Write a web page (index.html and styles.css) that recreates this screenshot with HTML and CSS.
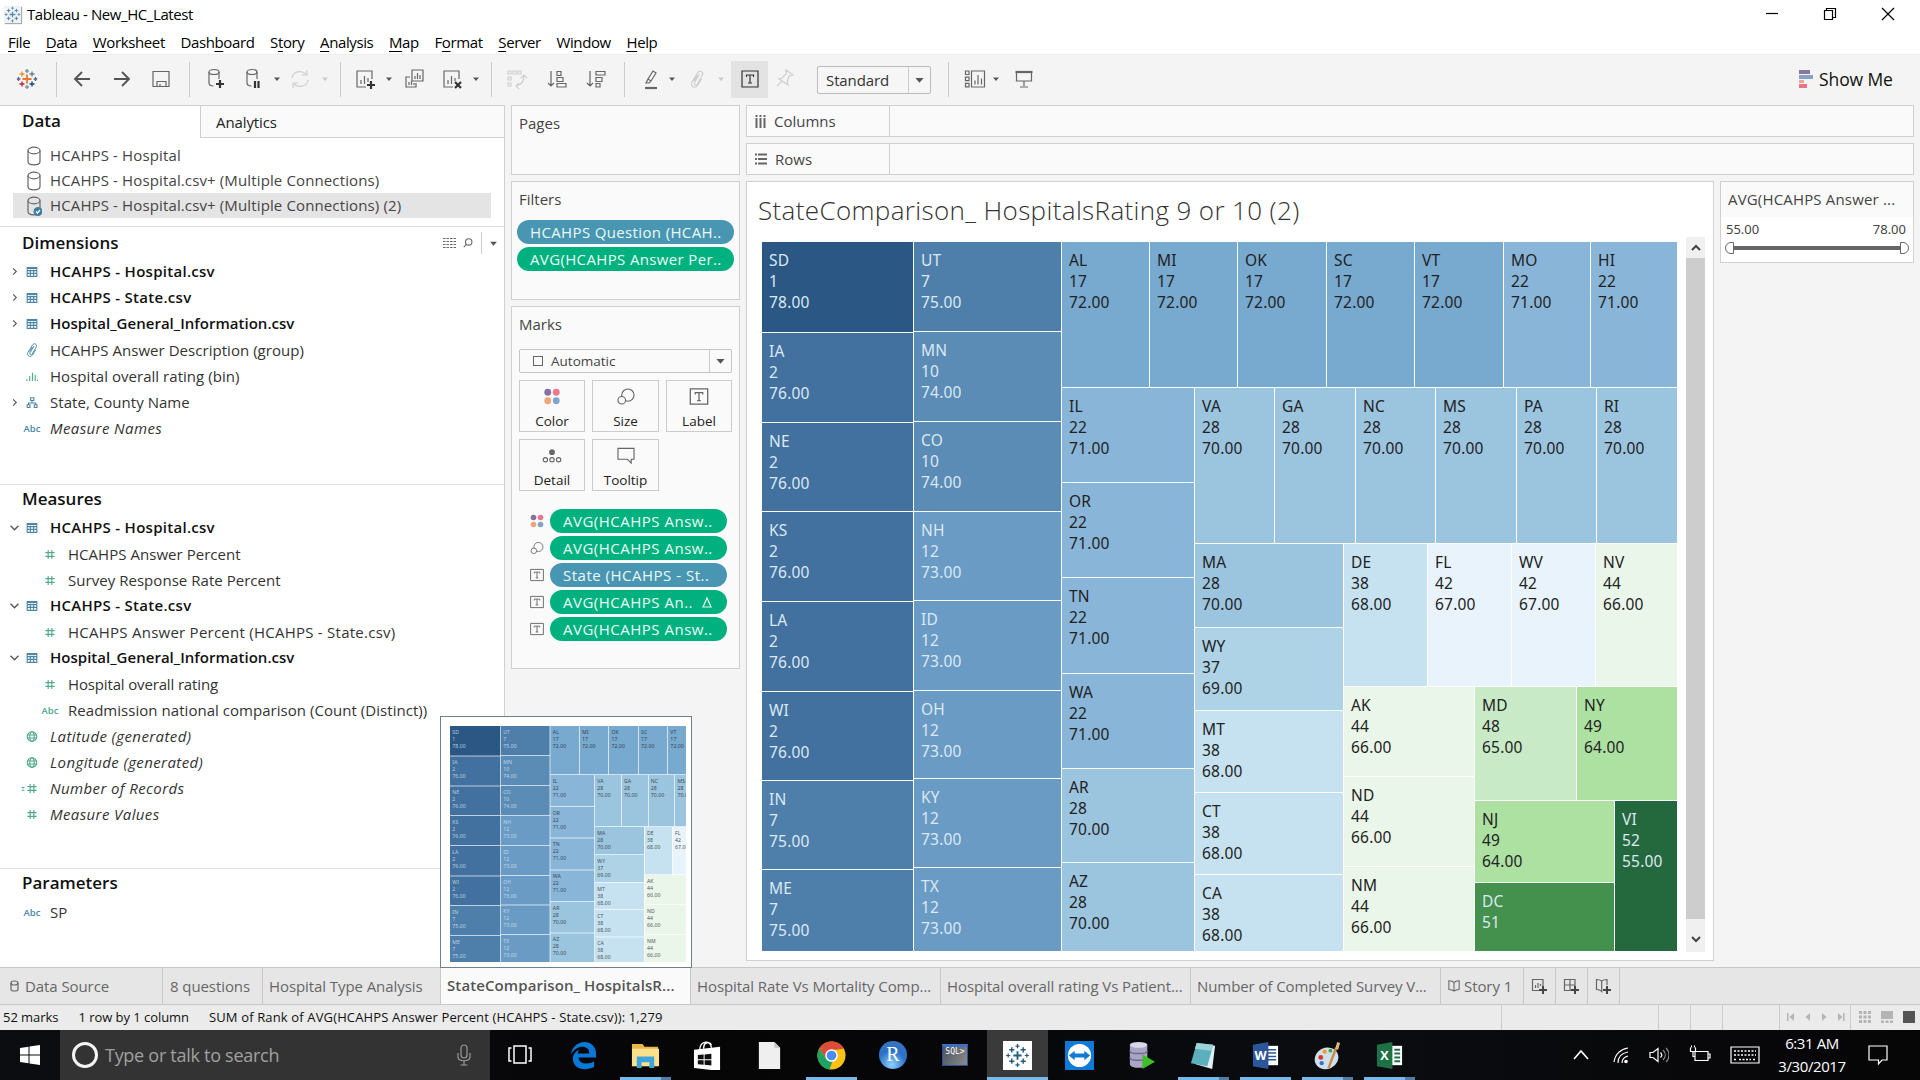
FILE: index.html
```html
<!DOCTYPE html>
<html lang="en">
<head>
<meta charset="utf-8">
<title>Tableau - New_HC_Latest</title>
<link rel="stylesheet" href="styles.css">
</head>
<body>
<svg class="sprites" width="0" height="0">
  <defs>
    <symbol id="caret" viewBox="0 0 8 8"><path d="M1 2.500h6L4 6z" fill="currentColor"/></symbol>
    <symbol id="spark" viewBox="0 0 24 24">
      <path d="M12 8v8M8 12h8" stroke-width="1.800"/>
      <path d="M12 1v4M10 3h4M12 19v4M10 21h4M1 12h4M3 10v4M19 12h4M21 10v4" stroke-width="1.200"/>
      <path d="M6.500 4v5M4 6.500h5M17.500 4v5M15 6.500h5M6.500 15v5M4 17.500h5M17.500 15v5M15 17.500h5" stroke-width="1.400"/>
    </symbol>
    <symbol id="cyl" viewBox="0 0 24 24"><ellipse cx="11" cy="5" rx="5" ry="2.500"/><path d="M6 5v11c0 2 2 3 4.500 3M16 5v7"/></symbol>
    <symbol id="db" viewBox="0 0 16 20"><ellipse cx="8" cy="4.500" rx="6" ry="3.300"/><path d="M2 4.500v11c0 4.400 12 4.400 12 0v-11"/></symbol>
    <symbol id="table" viewBox="0 0 12 11"><path d="M.7.7h10.600v9.600H.7zM.7 4h10.600M.7 7h10.600M4.200 3v7.300M7.800 3v7.300"/><path d="M.7 1.400h10.600" stroke-width="1.800"/></symbol>
    <symbol id="hash" viewBox="0 0 12 12"><path d="M4 1v10M8 1v10M1 4h10M1 8h10"/></symbol>
    <symbol id="globe" viewBox="0 0 12 12"><circle cx="6" cy="6" r="5.200"/><path d="M.8 4.300h10.400M.8 7.700h10.400"/><ellipse cx="6" cy="6" rx="2.400" ry="5.200"/></symbol>
    <symbol id="right" viewBox="0 0 8 10"><path d="M2.500 1.500L6 5 2.500 8.500"/></symbol>
    <symbol id="down" viewBox="0 0 10 8"><path d="M1.500 2.500L5 6l3.500-3.500"/></symbol>
    <symbol id="clip" viewBox="0 0 16 20"><path d="M10.500 5l-5 8.500c-1 2.500 1.500 3.500 2.800 1.500l5-8.500c1.500-4-2.500-6-4.800-2.500L3 13c-2 4.500 3 7 5.500 3.500l4-6.500M8.500 6L5 12"/></symbol>
    <symbol id="dots" viewBox="0 0 18 18"><circle cx="4.500" cy="4.500" r="3.600" fill="#8670a0" stroke="none"/><circle cx="13.500" cy="4.500" r="3.600" fill="#ee7789" stroke="none"/><circle cx="4.500" cy="13.500" r="3.600" fill="#f0a47c" stroke="none"/><circle cx="13.500" cy="13.500" r="3.600" fill="#7fa5cc" stroke="none"/></symbol>
    <symbol id="size" viewBox="0 0 20 18"><circle cx="12" cy="7.500" r="6.500"/><circle cx="5.500" cy="13" r="4" fill="#fafafa"/></symbol>
    <symbol id="label" viewBox="0 0 18 16"><path d="M.8.8h16.400v14.400H.8z"/><path d="M5.500 6V4.300h7V6M9 4.300v7.400M7.300 11.800h3.400"/></symbol>
    <symbol id="book" viewBox="0 0 14 16"><path d="M1 2c2.500 0 4.500 0 6 2 1.500-2 3.500-2 6-2v10c-3 0-4.500.5-6 2-1.500-1.500-3-2-6-2zM7 4v10"/></symbol>
  </defs>
</svg>

<div class="app">
  <header class="titlebar">
    <svg class="applogo" viewBox="0 0 24 24" stroke="#5b87a6"><use href="#spark"/></svg>
    <span class="apptitle">Tableau - New_HC_Latest</span>
    <div class="winbtns">
      <svg width="14" height="16" viewBox="0 0 14 16"><path d="M1 7.500h12"/></svg>
      <svg width="14" height="16" viewBox="0 0 14 16"><path d="M1.500 4.500h8v9h-8zM3.500 4.500v-2h9v9h-3"/></svg>
      <svg width="14" height="16" viewBox="0 0 14 16"><path d="M1 2l12 12M13 2L1 14"/></svg>
    </div>
  </header>
  <nav class="menubar">
    <span><u>F</u>ile</span><span><u>D</u>ata</span><span><u>W</u>orksheet</span><span>Dash<u>b</u>oard</span><span>S<u>t</u>ory</span><span><u>A</u>nalysis</span><span><u>M</u>ap</span><span>F<u>o</u>rmat</span><span><u>S</u>erver</span><span>Wi<u>n</u>dow</span><span><u>H</u>elp</span>
  </nav>

  <div class="toolbar">
    <svg class="ic" viewBox="0 0 24 24"><g stroke-width="1.400"><path d="M12 7.500v9M7.500 12h9" stroke="#e8762c" stroke-width="1.800"/><path d="M12 2v4M10 4h4M12 18v4M10 20h4" stroke="#7199a6"/><path d="M3.500 10v4M1.800 12h3.600M20.500 10v4M18.600 12h3.600" stroke="#5b6591"/><path d="M7 4.500v5M4.500 7h5" stroke="#eb912c"/><path d="M17 4.500v5M14.500 7h5" stroke="#59879b"/><path d="M7 14.500v5M4.500 17h5" stroke="#c72035"/><path d="M17 14.500v5M14.500 17h5" stroke="#1f447e"/></g></svg>
    <i class="sep"></i>
    <svg class="ic heavy" viewBox="0 0 24 24"><path d="M20 12H5M12 5l-7 7 7 7"/></svg>
    <svg class="ic heavy" viewBox="0 0 24 24"><path d="M4 12h15M12 5l7 7-7 7"/></svg>
    <svg class="ic" viewBox="0 0 24 24"><path d="M4 4.500h16v15H4zM8 19.500v-5h9v5M11 17v2"/></svg>
    <i class="sep"></i>
    <svg class="ic" viewBox="0 0 24 24"><use href="#cyl"/><path class="bold" d="M17 13v8M13 17h8"/></svg>
    <svg class="ic" viewBox="0 0 24 24"><use href="#cyl"/><path class="bold" d="M14 14v7M17.500 14v7"/></svg>
    <svg class="caret"><use href="#caret"/></svg>
    <svg class="ic off" viewBox="0 0 24 24"><path d="M4 11a8 7 0 0 1 14-4M20 13a8 7 0 0 1-14 4M19 3v5h-5M5 21v-5h5"/></svg>
    <svg class="caret off"><use href="#caret"/></svg>
    <i class="sep"></i>
    <svg class="ic" viewBox="0 0 24 24"><path d="M19 12V4H4v16h9M8 17v-4M11.500 17V9M15 15v-4"/><path class="bold" d="M18 14v8M14 18h8"/></svg>
    <svg class="caret"><use href="#caret"/></svg>
    <svg class="ic" viewBox="0 0 24 24"><path d="M10 3h11v11H10zM13 12V9M15.500 12V6M18 12V8M8 10H4v10h10v-4M7 18v-3M9.500 18v-4M12 18v-2"/></svg>
    <svg class="ic" viewBox="0 0 24 24"><path d="M19 12V4H4v16h9M8 17v-4M11.500 17V9M15 14v-3"/><path class="bold" d="M15 15l6 6M21 15l-6 6"/></svg>
    <svg class="caret"><use href="#caret"/></svg>
    <i class="sep"></i>
    <svg class="ic off" viewBox="0 0 24 24"><path d="M4 4h3v3H4zM9 4h3v3H9zM14 4h3v3h-3zM4 10h3v3H4zM4 16h3v3H4zM20 9c0 6-3 9-8 10M17 11l3-3 3 3M15 16l-3 3 3 3"/></svg>
    <svg class="ic" viewBox="0 0 24 24"><path d="M6 4v15M3 16l3 3 3-3M12 4.500h4v4h-4zM12 10.500h6v4h-6zM12 16.500h9v3.500h-9z"/></svg>
    <svg class="ic" viewBox="0 0 24 24"><path d="M6 4v15M3 16l3 3 3-3M12 4.500h9v3.500h-9zM12 10.500h6v4h-6zM12 16.500h4v3.500h-4z"/></svg>
    <i class="sep"></i>
    <svg class="ic" viewBox="0 0 24 24"><path d="M9 12l5-8 3 2-5 8zM9 12l-2 4h3l2-2"/><path d="M6 21h12" stroke-width="2.200"/></svg>
    <svg class="caret"><use href="#caret"/></svg>
    <svg class="ic off" viewBox="-2 -2 20 24"><use href="#clip" width="16" height="20"/></svg>
    <svg class="caret off"><use href="#caret"/></svg>
    <span class="active"><svg width="18" height="18" viewBox="0 0 18 18"><path d="M1 1h16v16H1zM5.500 7V5h7v2M9 5v8M7 13h4"/></svg></span>
    <svg class="ic off" viewBox="0 0 24 24"><path d="M13 3l7 5-4 1-2 6 1 3-9-6 3-1 4-4zM9 14l-5 5"/></svg>
    <span class="select">Standard<svg class="tri"><use href="#caret"/></svg></span>
    <i class="sep"></i>
    <svg class="ic" viewBox="0 0 24 24"><path d="M2.500 4h3.500v3.500H2.500zM2.500 10.200h3.500v3.500H2.500zM2.500 16.300h3.500v3.500H2.500zM8.500 4h13v16h-13zM12 17.500v-4M15 17.500V8M18.500 17.500v-6"/></svg>
    <svg class="caret"><use href="#caret"/></svg>
    <svg class="ic" viewBox="0 0 24 24"><path d="M4.500 5v9h15V5M12 14v5M8 20h8"/><path d="M3.500 5h17" stroke-width="2.200"/></svg>
    <span class="showme"><svg width="14" height="18"><path fill="#857a9c" d="M0 0h11v4H0z"/><path fill="#86a3c6" d="M0 5h14v4H0z"/><path fill="#efa88e" d="M0 10h5v3H0z"/><path fill="#e87688" d="M0 14h8v4H0z"/></svg>Show Me</span>
  </div>

  <main class="work">
    <aside class="side">
      <div class="sidetabs">
        <b>Data</b>
        <div>Analytics<svg width="8" height="10" viewBox="0 0 8 10" fill="#556"><path d="M4 0l3 4H1zM4 10L1 6h6z"/></svg></div>
      </div>
      <ul class="sources">
        <li><svg><use href="#db"/></svg><span>HCAHPS - Hospital</span></li>
        <li><svg><use href="#db"/></svg><span>HCAHPS - Hospital.csv+ (Multiple Connections)</span></li>
        <li class="sel"><svg viewBox="0 0 16 20"><use href="#db"/><circle cx="12" cy="15.500" r="4.500" fill="#3d7e9e" stroke="none"/><path d="M10 15.500l1.500 1.500 2.500-3" stroke="#fff"/></svg><span>HCAHPS - Hospital.csv+ (Multiple Connections) (2)</span></li>
      </ul>
      <section class="fields dims">
        <h2>Dimensions
          <span class="tools"><svg width="13" height="10" viewBox="0 0 13 10"><path d="M0 .5h13M0 3.500h13M0 6.500h13M0 9.500h13" stroke-dasharray="2.500 1"/></svg><svg width="10" height="10" viewBox="0 0 11 11"><circle cx="6.300" cy="4.300" r="3.500"/><path d="M4 6.800L.8 10"/></svg><i></i><svg width="9" height="9"><use href="#caret"/></svg></span>
        </h2>
        <p class="tbl"><svg class="ch"><use href="#right"/></svg><svg class="fi"><use href="#table"/></svg>HCAHPS - Hospital.csv</p>
        <p class="tbl"><svg class="ch"><use href="#right"/></svg><svg class="fi"><use href="#table"/></svg>HCAHPS - State.csv</p>
        <p class="tbl long"><svg class="ch"><use href="#right"/></svg><svg class="fi"><use href="#table"/></svg>Hospital_General_Information.csv</p>
        <p><i class="ch"></i><svg class="fi tall"><use href="#clip"/></svg>HCAHPS Answer Description (group)</p>
        <p class="green"><i class="ch"></i><svg class="fi" viewBox="0 0 13 12"><path d="M1 11V9M4 11V5.500M7 11V2M10 11V4M12.500 11V9.500"/></svg>Hospital overall rating (bin)</p>
        <p><svg class="ch"><use href="#right"/></svg><svg class="fi" viewBox="0 0 12 12"><path d="M4.500.8h3.500v3H4.500zM.8 8.500h3v3h-3zM8.500 8.500h3v3h-3zM6 4v2.500M2.200 8.500v-2h7.800v2"/></svg>State, County Name</p>
        <p><i class="ch"></i><span class="abc">Abc</span><em>Measure Names</em></p>
      </section>
      <section class="fields meas">
        <h2>Measures</h2>
        <p class="tbl"><svg class="ch"><use href="#down"/></svg><svg class="fi"><use href="#table"/></svg>HCAHPS - Hospital.csv</p>
        <p class="green in"><i class="ch"></i><svg class="fi"><use href="#hash"/></svg>HCAHPS Answer Percent</p>
        <p class="green in"><i class="ch"></i><svg class="fi"><use href="#hash"/></svg>Survey Response Rate Percent</p>
        <p class="tbl"><svg class="ch"><use href="#down"/></svg><svg class="fi"><use href="#table"/></svg>HCAHPS - State.csv</p>
        <p class="green in wide"><i class="ch"></i><svg class="fi"><use href="#hash"/></svg>HCAHPS Answer Percent (HCAHPS - State.csv)</p>
        <p class="tbl long"><svg class="ch"><use href="#down"/></svg><svg class="fi"><use href="#table"/></svg>Hospital_General_Information.csv</p>
        <p class="green in tight"><i class="ch"></i><svg class="fi"><use href="#hash"/></svg>Hospital overall rating</p>
        <p class="green in"><i class="ch"></i><span class="abc">Abc</span>Readmission national comparison (Count (Distinct))</p>
        <p class="green"><i class="ch"></i><svg class="fi"><use href="#globe"/></svg><em>Latitude (generated)</em></p>
        <p class="green"><i class="ch"></i><svg class="fi"><use href="#globe"/></svg><em>Longitude (generated)</em></p>
        <p class="green"><svg class="ch eq" viewBox="0 0 15 10"><path d="M15.500 4h3M15.500 7h3"/></svg><svg class="fi"><use href="#hash"/></svg><em>Number of Records</em></p>
        <p class="green"><i class="ch"></i><svg class="fi"><use href="#hash"/></svg><em>Measure Values</em></p>
      </section>
      <section class="fields params">
        <h2>Parameters</h2>
        <p><i class="ch"></i><span class="abc">Abc</span>SP</p>
      </section>
    </aside>

    <div class="cards">
      <section class="card pages"><h3>Pages</h3></section>
      <section class="card filters"><h3>Filters</h3>
        <div class="pill blue">HCAHPS Question (HCAH..</div>
        <div class="pill">AVG(HCAHPS Answer Per..</div>
      </section>
      <section class="card marks"><h3>Marks</h3>
        <div class="marktype"><i></i>Automatic<svg class="tri"><use href="#caret"/></svg></div>
        <div class="btns">
          <div><svg><use href="#dots"/></svg>Color</div>
          <div><svg><use href="#size"/></svg>Size</div>
          <div><svg><use href="#label"/></svg>Label</div>
          <div><svg viewBox="0 0 20 18"><circle cx="10" cy="5.500" r="3" fill="#666" stroke="none"/><circle cx="3" cy="13.500" r="2.300"/><circle cx="10" cy="13.500" r="2.300"/><circle cx="17" cy="13.500" r="2.300"/></svg>Detail</div>
          <div><svg viewBox="0 0 20 18"><path d="M1.500 1.500h17v11.500h-3v4l-4-4h-10z"/></svg>Tooltip</div>
        </div>
        <ul class="enc">
          <li><svg><use href="#dots"/></svg><div class="pill">AVG(HCAHPS Answ..</div></li>
          <li><svg><use href="#size"/></svg><div class="pill">AVG(HCAHPS Answ..</div></li>
          <li><svg><use href="#label"/></svg><div class="pill blue">State (HCAHPS - St..</div></li>
          <li><svg><use href="#label"/></svg><div class="pill">AVG(HCAHPS An..<span class="delta"><svg width="10" height="11" viewBox="0 0 10 11"><path d="M1 10L5 1l4 9z"/></svg></span></div></li>
          <li><svg><use href="#label"/></svg><div class="pill">AVG(HCAHPS Answ..</div></li>
        </ul>
      </section>
    </div>

    <div class="canvas">
      <div class="shelf"><div><svg width="11" height="13" viewBox="0 0 11 13"><path d="M1.500 3v10M5.500 3v10M9.500 3v10M1.500 0v2M5.500 0v2M9.500 0v2" stroke-width="2"/></svg>Columns</div></div>
      <div class="shelf"><div><svg width="12" height="12" viewBox="0 0 12 12"><path d="M3 1.500h9M3 6h9M3 10.500h9M0 1.500h2M0 6h2M0 10.500h2" stroke-width="2"/></svg>Rows</div></div>
      <div class="viewrow">
        <section class="view">
          <h1>StateComparison_ HospitalsRating 9 or 10 (2)</h1>
          <div class="plot">
            <div class="treemap" id="map"></div>
            <div class="scroll"><svg viewBox="0 0 10 8"><path d="M1 6l4-4 4 4"/></svg><i></i><svg viewBox="0 0 10 8"><path d="M1 2l4 4 4-4"/></svg></div>
          </div>
        </section>
        <section class="legend">
          <h4>AVG(HCAHPS Answer ...</h4>
          <div class="range"><span>55.00</span><span>78.00</span></div>
          <div class="slider"><i></i><b></b><i class="r"></i></div>
        </section>
      </div>
    </div>
  </main>

  <div class="sheets">
    <span class="s1"><svg width="9" height="12" viewBox="0 0 9 12"><ellipse cx="4.500" cy="3" rx="3.500" ry="2"/><path d="M1 3v6.500c0 2 7 2 7 0V3"/></svg>Data Source</span>
    <span class="s2">8 questions</span>
    <span class="s3">Hospital Type Analysis</span>
    <span class="s4 cur">StateComparison_ HospitalsR...
      <div class="preview"><div class="shot"><div class="treemap" id="mini"></div></div></div>
    </span>
    <span class="s5">Hospital Rate Vs Mortality Comp...</span>
    <span class="s6">Hospital overall rating Vs Patient...</span>
    <span class="s7">Number of Completed Survey V...</span>
    <span class="s8"><svg width="12" height="14"><use href="#book"/></svg>Story 1</span>
    <span class="add"><svg viewBox="0 0 16 16"><path d="M12 8V1.500H1.500v11H8M4.500 10V7M7 10V5M9.500 8V6"/><path class="p" d="M12 8v8M8 12h8"/></svg></span>
    <span class="add"><svg viewBox="0 0 16 16"><path d="M12 8V1.500H1.500v11H8M1.500 7H12M7 1.500v11"/><path class="p" d="M12 8v8M8 12h8"/></svg></span>
    <span class="add"><svg viewBox="0 0 16 16"><path d="M12 7V1.500c-3 0-4 .5-5.300 1.500C5.500 2 4 1.500 1.500 1.500v10c2.500 0 4 .5 5.200 2V3"/><path class="p" d="M12 8v8M8 12h8"/></svg></span>
  </div>

  <footer class="status">
    <span>52 marks</span><span>1 row by 1 column</span><span class="sum">SUM of Rank of AVG(HCAHPS Answer Percent (HCAHPS - State.csv)): 1,279</span>
    <div class="slots"><i></i><i></i><i></i><i></i>
      <div class="nav"><svg viewBox="0 0 60 10"><path d="M1 1h1.500v8H1zM8 1v8L3.500 5zM24 1v8l-4.500-4zM36 1v8l4.500-4zM52 1v8l4.500-4zM57 1h1.500v8H57z"/></svg></div>
      <div class="modes"><svg width="12" height="12"><path d="M0 0h3v3H0zM4.500 0h3v3h-3zM9 0h3v3H9zM0 4.500h3v3H0zM4.500 4.500h3v3h-3zM9 4.500h3v3H9zM0 9h3v3H0zM4.500 9h3v3h-3zM9 9h3v3H9z"/></svg><svg width="12" height="12"><path d="M0 0h12v8H0zM0 9.500h3V12H0zM4.500 9.500h3V12h-3zM9 9.500h3V12H9z"/></svg><svg width="12" height="12"><path fill="#555" d="M0 0h12v12H0z"/></svg></div>
    </div>
  </footer>

  <div class="taskbar">
    <div class="start"><svg width="20" height="20" viewBox="0 0 20 20"><path fill="#fff" d="M0 3l8.500-1.300v7.800H0zM9.500 1.500L20 0v9.500H9.500zM0 10.500h8.500v7.800L0 17zM9.500 10.500H20V20L9.500 18.500z"/></svg></div>
    <div class="search"><i></i><span>Type or talk to search</span><svg width="14" height="22" viewBox="0 0 14 22"><rect x="4" y="1" width="6" height="13" rx="3"/><path d="M1 9v4c0 5 12 5 12 0V9M7 17v4M3.500 21h7"/></svg></div>
    <div class="tv"><svg width="24" height="20" viewBox="0 0 24 20"><path d="M6 1h12v17H6zM3.500 3H1v13h2.500M20.500 3H23v13h-2.500"/></svg></div>
    <div class="apps">
      <div><svg viewBox="0 0 30 30"><path fill="#0a78d7" d="M2 14C3 6 9 1 16 1c8 0 12 6 12 12v4H10c0 7 10 8 16 4v6C15 32 4 28 4 18c0-4 3-8 7-9-2 2-2 3-2 4h12C21 3 7 4 2 14z"/></svg></div>
      <div class="run multi"><svg viewBox="0 0 30 30"><path fill="#e9b64a" d="M1 3h11l2 3h14v20H1z"/><path fill="#fbe08d" d="M1 8h28v18H1z"/><path fill="#3ea6dc" d="M6 28V16h18v12h-5v-6h-8v6z"/></svg></div>
      <div><svg viewBox="0 0 30 30"><path fill="#fff" d="M1 9l27-3v25L1 28z"/><path d="M7 9C7-1 19-1 19 7M11 8c0-8 7-7 8-4" fill="none" stroke="#fff" stroke-width="1.500"/><path fill="#111" d="M5 14.600l6-.6V19H5zM12 13.900l7-.8V19h-7zM5 20h6v4.500L5 24zM12 20h7v5.300l-7-.8z"/></svg></div>
      <div><svg viewBox="0 0 30 30"><path fill="#efefef" d="M4 1h16l6 6v22H4z"/><path fill="#c4c4c4" d="M20 1l6 6h-6z"/></svg></div>
      <div class="run"><svg viewBox="0 0 30 30"><circle cx="15" cy="15" r="14.500" fill="#fbc116"/><path fill="#dd4b39" d="M2.400 7.800A14.500 14.500 0 0 1 27.700 8L15 9z"/><path fill="#dd4b39" d="M2.400 7.800L9 18l6-9h12z"/><path fill="#1da462" d="M2.400 7.800L9.500 18.500 16 21l-3 8.400A14.500 14.500 0 0 1 2.400 7.800z"/><circle cx="15" cy="15" r="6.500" fill="#fff"/><circle cx="15" cy="15" r="5" fill="#4a8af4"/></svg></div>
      <div><span class="rlogo">R</span></div>
      <div><span class="sql">SQL&gt;</span></div>
      <div class="run on"><svg class="tb" viewBox="-2 -2 28 28"><path d="M-2-2h28v28H-2z" fill="#fff" stroke="none"/><use href="#spark" width="24" height="24"/></svg></div>
      <div><svg viewBox="0 0 30 30"><path fill="#0f7ad8" d="M0 0h30v30H0z"/><circle cx="15" cy="15" r="12" fill="#fff"/><path fill="#0f7ad8" d="M4 15l6-5v3h10v-3l6 5-6 5v-3H10v3z"/></svg></div>
      <div><svg viewBox="0 0 30 30"><path fill="#a9a5c4" d="M3 4v20c0 5 18 5 18 0V4z"/><path fill="none" stroke="#6f6a94" stroke-width="1.500" d="M3 10c0 4 18 4 18 0M3 17c0 4 18 4 18 0"/><ellipse cx="12" cy="4" rx="9" ry="3" fill="#d9d7ea"/><path fill="#3fbf26" d="M16 14l13 7.500L16 29z"/></svg></div>
      <div class="run multi"><svg viewBox="0 0 30 30"><path fill="#dfeff2" d="M9 3l18 2-3 24-17-5z"/><path fill="#5ab0bd" d="M8 2l17 2-6 22-17-3z"/><path fill="#9fd3dc" d="M8 2l17 2-2 6L6 8z"/></svg></div>
      <div class="run"><svg viewBox="0 0 30 30"><path fill="#fff" d="M14 5h14v20H14z"/><path stroke="#2b579a" stroke-width="1.600" d="M17 9h9M17 12.500h9M17 16h9M17 19.500h9"/><path fill="#2b579a" d="M2 4l16-3v28L2 26z"/><text x="3.500" y="20" class="gl">W</text></svg></div>
      <div class="run multi"><svg viewBox="0 0 30 30"><ellipse cx="14" cy="18" rx="12.500" ry="11" fill="#cfe0ec" transform="rotate(-25 14 18)"/><circle cx="8" cy="17" r="2.500" fill="#d33"/><circle cx="12" cy="11" r="2.200" fill="#e9a11c"/><circle cx="18" cy="10" r="2" fill="#3aa84b"/><circle cx="9" cy="23" r="2.200" fill="#3a6fd0"/><path d="M16 28L24 7" stroke="#c98a4b" stroke-width="2.500"/><path d="M23 8l2-7 3 1-2 7z" fill="#e3b77a"/></svg></div>
      <div class="run multi"><svg viewBox="0 0 30 30"><path fill="#fff" d="M14 5h14v20H14z"/><path stroke="#1e7145" stroke-width="2" d="M20 9h6M20 13h6M20 17h6M20 21h6"/><path fill="#1e7145" d="M2 4l16-3v28L2 26z"/><text x="5.500" y="20" class="gl">X</text></svg></div>
    </div>
    <div class="tray">
      <svg width="18" height="24" viewBox="0 0 18 24"><path d="M2 16l7-8 7 8" stroke-width="1.600"/></svg>
      <svg width="18" height="24" viewBox="0 0 18 24"><path d="M2 19C3 11 9 6 16 5M6 20c0-6 4-10 10-11M10 20c0-4 2-6 6-7"/><circle cx="14" cy="18.500" r="1.800" fill="#fff" stroke="none"/></svg>
      <svg width="20" height="24" viewBox="0 0 20 24"><path d="M1 9.500h3l5-4v13l-5-4H1zM11.500 9.500c1.500 1.500 1.500 3.500 0 5"/><path d="M14 7c3 3 3 7 0 10M17 5c4 4 4 10 0 14" stroke="#888"/></svg>
      <svg width="22" height="24" viewBox="0 0 22 24"><path d="M6 8.500h13v9H6zM19.500 11h1.500v4h-1.500M1.500 4.500v4h5v-4M4 8.500v5h2.500M2.500 2.500v2M5.500 2.500v2"/></svg>
      <svg width="30" height="24" viewBox="0 0 30 24"><path d="M1 4h28v16H1z"/><path d="M4 8h22M4 12h22M4 16.500h3M9 16.500h12M23 16.500h3" stroke-dasharray="2 1.500" stroke-width="1.600"/></svg>
      <div class="clock">6:31 AM<br>3/30/2017</div>
      <svg width="20" height="24" viewBox="0 0 20 24"><path d="M1 3h18v14h-5l-3.500 4V17H1z"/></svg>
    </div>
  </div>
</div>
<script src="treemap.js"></script>
</body>
</html>
```
FILE: styles.css
```css
* { box-sizing: border-box; }
body, h1, h2, h3, h4, p, ul { margin: 0; padding: 0; font-weight: normal; }
ul { list-style: none; }
body { font-family: "Open Sans", "Noto Sans", sans-serif; color: #222; width: 1920px; height: 1080px; overflow: hidden; }
svg { fill: none; stroke: #666; stroke-width: 1.2; display: block; flex: none; }
.sprites { position: absolute; }
.app { display: flex; flex-direction: column; width: 1920px; height: 1080px; background: #f4f4f4; }

.titlebar { height: 30px; background: #fff; display: flex; align-items: center; padding: 0 0 2px 4px; font-size: 15px; color: #000; }
.applogo { width: 17px; height: 17px; background: #edf3f6; box-shadow: 1px 1px 1px #aaa; margin-right: 6px; stroke: #5b87a6; }
.apptitle { letter-spacing: -.42px; }
.winbtns { margin-left: auto; display: flex; gap: 44px; padding-right: 25px; }
.winbtns svg { stroke: #000; }
.menubar { height: 24px; background: #fff; display: flex; align-items: center; gap: 15.600px; padding: 0 0 0 8px; font-size: 15px; letter-spacing: -.38px; color: #000; }
.menubar u { text-underline-offset: 3px; }

.toolbar { height: 51px; padding: 0 0 2px 15px; display: grid; align-items: center;
  grid-template-columns: 41px 14px 40px 39px 40px 14px 38px 32px 15px 33px 19px 13px 32px 17px 38px 32px 19px 13px 41px 39px 40px 15px 29px 17px 32px 14px 42px 44px 131px 15px 29px 20px 787px auto; border-top: 1px solid #ededed; }
.ic { width: 24px; height: 24px; }
.ic.heavy { stroke-width: 1.900; stroke: #555; }
.bold { stroke: #333; stroke-width: 2.2; }
.off { opacity: .25; }
.sep { width: 1px; height: 35px; background: #ccc; }
.caret { width: 8px; height: 8px; color: #555; stroke: none; }
.active { width: 37px; height: 37px; background: #e3e3e3; display: grid; place-items: center; }
.active svg { stroke: #333; stroke-width: 1.200; }
.select { width: 114px; height: 28px; border: 1px solid #bbb; border-radius: 2px; background: #f6f6f6; font-size: 15px; letter-spacing: -.1px; display: flex; align-items: center; justify-content: space-between; padding-left: 8px; color: #333; margin-top: 2px; }
.tri { width: 22px; height: 100%; padding: 0 5px; border-left: 1px solid #ccc; color: #555; stroke: none; }
.showme { display: flex; align-items: center; gap: 6px; font-size: 17.500px; color: #111; letter-spacing: -.1px; white-space: nowrap; }
.showme svg { stroke: none; }

.work { display: flex; height: 862px; }
.side { width: 505px; border: 1px solid #d0d0d0; border-width: 1px 1px 0 0; background: #fff; }
.sidetabs { display: flex; height: 32px; }
.sidetabs b { width: 200px; padding-left: 22px; font-size: 17px; line-height: 29px; color: #111; font-weight: 600; }
.sidetabs div { flex: 1; border: 1px solid #d0d0d0; border-width: 0 0 1px 1px; background: #fafafa; padding: 0 7px 0 15px; display: flex; justify-content: space-between; align-items: center; font-size: 15px; letter-spacing: -.1px; }
.sidetabs svg { stroke: none; }
.sources { padding: 5px 13px 0; height: 88px; font-size: 15px; color: #444; letter-spacing: .13px; }
.sources li { height: 25px; display: flex; align-items: center; padding-left: 13px; gap: 8px; }
.sources span { margin-top: -2px; white-space: nowrap; }
.sources svg { width: 16px; height: 20px; }
.sources .sel { background: #e4e4e4; }
.fields { border-top: 1px solid #ddd; font-size: 15px; }
.fields h2 { height: 30px; line-height: 27px; padding-left: 22px; font-size: 17px; font-weight: 600; color: #111; display: flex; justify-content: space-between; }
.dims { height: 258px; }
.fields.dims h2 { height: 32px; line-height: 32px; }
.meas { height: 384px; }
.tools { display: flex; align-items: center; gap: 7px; padding-right: 6px; }
.tools i { width: 1px; height: 22px; background: #ccc; margin-left: 1px; }
.tools svg:last-child { color: #555; stroke: none; }
.fields p { height: 26px; display: flex; align-items: center; padding-left: 7px; white-space: nowrap; color: #333; letter-spacing: .04px; }
.fields .in { padding-left: 25px; }
.fields .tbl { font-weight: 600; color: #111; letter-spacing: .28px; padding-bottom: 2px; }
.fields .tbl.long { letter-spacing: .02px; }
.fields .wide { letter-spacing: .25px; }
.fields .tight { letter-spacing: -.15px; }
.fields em { letter-spacing: .4px; }
.ch { width: 15px; height: 9px; stroke: #555; }
.ch.eq { overflow: visible; stroke: #4fa88b; margin-right: -1px; margin-left: -1px; width: 17px; }
.fi { width: 20px; height: 11px; margin-right: 8px; stroke: #4d86a5; }
.fi.tall { height: 16px; }
.tbl .fi { height: 10px; margin-top: 2px; }
.green .fi { stroke: #4fa88b; }
.abc { width: 20px; margin-right: 8px; font-size: 9.500px; font-weight: 600; color: #4d86a5; text-align: center; letter-spacing: 0; }
.green .abc { color: #4fa88b; }

.cards { width: 229px; margin-left: 6px; display: flex; flex-direction: column; gap: 6px; }
.card { border: 1px solid #d0d0d0; background: #fafafa; }
.card h3 { font-size: 15px; color: #444; height: 38px; line-height: 34px; padding-left: 7px; }
.pages { height: 70px; }
.filters { height: 119px; padding-left: 5px; }
.filters h3 { padding-left: 2px; }
.filters .pill { width: 217px; margin-bottom: 3px; letter-spacing: .36px; }
.pill { height: 24px; border-radius: 12px; background: #00b180; color: #eafaf5; font-size: 15px; font-weight: 500; line-height: 24px; padding-left: 13px; white-space: nowrap; letter-spacing: .5px; }
.pill.blue { background: #4996b2; }
.marks { height: 363px; padding: 0 7px; }
.card.marks h3 { height: 42px; line-height: 35px; padding: 0; }
.marktype { height: 24px; border: 1px solid #c4c4c4; border-radius: 2px; display: flex; align-items: center; font-size: 13.500px; color: #444; padding-left: 13px; }
.marktype i { width: 10px; height: 10px; border: 1px solid #666; margin-right: 8px; }
.marktype .tri { margin-left: auto; }
.btns { display: grid; grid-template-columns: 66px 67px 66px; gap: 7px; margin-top: 7px; font-size: 13.500px; color: #222; }
.btns div { height: 52px; border: 1px solid #ccc; display: flex; flex-direction: column; align-items: center; justify-content: space-between; padding: 7px 0 1px; line-height: 18px; }
.btns svg { width: 20px; height: 17px; }
.enc { margin-top: 18px; }
.enc li { display: flex; align-items: center; height: 27px; padding: 0 0 3px 11px; gap: 6px; }
.enc li > svg { width: 14px; height: 14px; }
.enc .pill { width: 177px; display: flex; align-items: center; }
.delta svg { stroke: #eafaf5; margin-left: 9px; }

.canvas { width: 1168px; margin-left: 6px; display: flex; flex-direction: column; gap: 6px; }
.shelf { height: 32px; border: 1px solid #d0d0d0; background: #fafafa; }
.shelf div { width: 143px; height: 30px; border-right: 1px solid #d0d0d0; display: flex; align-items: center; gap: 8px; padding-left: 8px; font-size: 15px; color: #444; }
.viewrow { display: flex; gap: 6px; align-items: flex-start; }
.view { width: 968px; height: 780px; border: 1px solid #d0d0d0; background: #fff; padding-left: 15px; }
.view h1 { height: 55px; line-height: 57px; margin-left: -4px; font-size: 26px; font-weight: 300; letter-spacing: .36px; color: #333; white-space: nowrap; }
.plot { display: flex; align-items: flex-start; }
.treemap { display: flex; gap: 1px; width: 915px; height: 709px; margin-top: 5px; background: #fff; font-family: "Noto Sans", sans-serif; font-size: 15.500px; line-height: 21px; letter-spacing: .2px; }
.treemap .g { display: flex; gap: 1px; min-width: 0; min-height: 0; }
.treemap .col { flex-direction: column; }
.cell { min-width: 0; min-height: 0; overflow: hidden; white-space: pre; color: #222; }
.cell p { padding: 8px 0 0 7px; }
.cell.lt { color: #dce8f2; }
.scroll { width: 19px; height: 715px; background: #f0f0f0; margin-left: 9px; display: flex; flex-direction: column; align-items: center; }
.scroll i { flex: 1; width: 19px; background: #cdcdcd; }
.scroll svg { width: 10px; height: 8px; margin: 7px 0 6px; stroke: #444; stroke-width: 2; }
.scroll svg:last-child { margin: 16px 0 9px; }
.legend { width: 194px; height: 82px; border: 1px solid #d0d0d0; background: #fff; }
.legend h4 { height: 35px; line-height: 34px; background: #fafafa; padding-left: 7px; font-size: 15px; color: #444; letter-spacing: .17px; white-space: nowrap; }
.range { display: flex; justify-content: space-between; padding: 3px 7px 0 5px; font-size: 13px; height: 25px; line-height: 19px; color: #444; font-family: "Noto Sans", sans-serif; }
.slider { display: flex; align-items: center; padding: 0 4px 0 4px; }
.slider i { width: 9px; height: 12px; border: 1px solid #666; border-radius: 6px 0 0 6px; background: #fff; }
.slider i.r { border-radius: 0 6px 6px 0; }
.slider b { flex: 1; height: 4px; background: #666; }

.sheets { height: 38px; background: #e6e6e6; border: 1px solid #c8c8c8; border-width: 1px 0; display: flex; font-size: 15px; color: #666; letter-spacing: -.08px; }
.sheets > span { border-right: 1px solid #c8c8c8; display: flex; align-items: center; padding-left: 7px; white-space: nowrap; }
.sheets .s1 { width: 163px; padding-left: 10px; gap: 6px; }
.s2 { width: 100px; } .s3 { width: 178px; } .s4 { width: 250px; } .s5, .s6, .s7 { width: 250px; }
.sheets > .s3, .sheets > .s5, .sheets > .s6, .sheets > .s7 { padding-left: 6px; }
.sheets .s8 { width: 83px; gap: 4px; padding-left: 7px; }
.sheets .cur { background: #fafafa; font-weight: 600; position: relative; color: #555; letter-spacing: .1px; padding: 0 0 2px 6px; }
.add { width: 32px; }
.add svg { width: 16px; height: 16px; }
.add .p { stroke-width: 2; stroke: #444; }
.preview { position: absolute; left: -1px; bottom: 36px; width: 252px; height: 252px; background: #fff; border: 1px solid #6f7f8c; padding: 9px; font-weight: 400; }
.shot { width: 236px; height: 236px; overflow: hidden; }
.shot .treemap { transform: scale(.3333); transform-origin: 0 0; margin: 0; gap: 2px; }
.shot .treemap .g { gap: 2px; }
.shot .cell p { opacity: .75; }

.status { height: 25px; background: #ebebeb; display: flex; align-items: center; font-size: 13px; color: #111; padding: 0 0 0 3px; line-height: 22px; letter-spacing: -.05px; }
.status span { margin: -2px 20px 0 0; white-space: nowrap; }
.status .sum { letter-spacing: .14px; }
.slots { margin-left: auto; display: grid; grid-template-columns: 157px 32px 32px 57px 71px 70px; height: 25px; }
.slots > * { border-left: 1px solid #ccc; display: flex; align-items: center; padding-bottom: 2px; }
.slots svg { stroke: none; fill: #b4b4b4; }
.nav svg { width: 60px; height: 10px; margin-left: 6px; }
.modes { gap: 10px; padding-left: 8px; }

.taskbar { height: 50px; background: linear-gradient(90deg, #0c0d10, #050506 40%, #0b0c10 70%, #060607); display: flex; color: #fff; }
.start { width: 60px; display: grid; place-items: center; }
.start svg { stroke: none; }
.search { width: 430px; background: #333; display: flex; align-items: center; padding: 0 19px 0 12px; font-size: 18px; color: #a0a0a0; }
.search i { width: 26px; height: 26px; border: 3px solid #f4f4f4; border-radius: 50%; margin-right: 7px; }
.search span { letter-spacing: -.28px; }
.search svg { margin-left: auto; stroke: #999; }
.tv { width: 60px; display: grid; place-items: center; }
.tv svg { stroke: #fff; stroke-width: 1.500; }
.apps { display: flex; margin-left: 2px; }
.apps div { width: 62px; display: grid; place-items: center; }
.apps svg { width: 29px; height: 29px; stroke: none; }
.apps .run { background: linear-gradient(#76b9ed, #76b9ed) 50% 100% / 51px 3px no-repeat; }
.apps .multi { background: linear-gradient(#4f7da3, #4f7da3) 47px 100% / 10px 3px no-repeat, linear-gradient(#76b9ed, #76b9ed) 50% 100% / 51px 3px no-repeat; }
.apps .on { background: linear-gradient(#76b9ed, #76b9ed) 50% 100% / 61px 3px no-repeat, linear-gradient(#3a3a3a, #3a3a3a) 50% 0 / 61px 50px no-repeat; }
.apps .tb { stroke: #235c85; }
.gl { font: bold 13px "Open Sans", sans-serif; fill: #fff; }
.rlogo { width: 28px; height: 28px; border-radius: 50%; background: radial-gradient(circle at 45% 85%, #8fd0ff, #2a72c8 50%, #3f74bd); font: 20px/27px "Liberation Serif", serif; text-align: center; }
.sql { width: 26px; height: 22px; background: linear-gradient(120deg, #4c5560, #8b8b8b); border: 1px solid #2a5099; border-top: 3px solid #3f6fc0; font: 8px/10px "DejaVu Sans Mono", monospace; text-align: center; }
.tray { margin-left: auto; display: flex; align-items: center; padding-right: 32px; }
.tray svg { stroke: #fff; }
.tray svg:nth-child(2) { margin-left: 22px; }
.tray svg:nth-child(3) { margin-left: 19px; }
.tray svg:nth-child(4) { margin-left: 20px; }
.tray svg:nth-child(5) { margin-left: 19px; }
.clock { width: 104px; margin-right: 4px; text-align: center; font-size: 15px; line-height: 23px; letter-spacing: -.4px; }
```
FILE: treemap.js
```js
// Fill for each average answer percent.
const fill = {78:'#2a5783',76:'#42709f',75:'#4e7fab',74:'#5b8cb6',73:'#6a9bc5',72:'#78a9cf',71:'#89b6d8',70:'#9bc4df',69:'#afd3e6',68:'#c6e2f0',67:'#e8f3fb',66:'#eaf6ea',65:'#c9eac6',64:'#ade1a2',60:'#44914d',55:'#24693d'};
// Leaf: [size, state, rank, value]; group: {s: size, d: direction, c: children}.
const tree = [
  {s:151, d:'col', c:[[90,'SD',1,78],[89,'IA',2,76],[88,'NE',2,76],[89,'KS',2,76],[89,'LA',2,76],[88,'WI',2,76],[88,'IN',7,75],[81,'ME',7,75]]},
  {s:147, d:'col', c:[[89,'UT',7,75],[89,'MN',10,74],[89,'CO',10,74],[88,'NH',12,73],[89,'ID',12,73],[87,'OH',12,73],[88,'KY',12,73],[83,'TX',12,73]]},
  {s:615, d:'col', c:[
    {s:145, d:'row', c:[[87,'AL',17,72],[87,'MI',17,72],[88,'OK',17,72],[87,'SC',17,72],[88,'VT',17,72],[86,'MO',22,71],[86,'HI',22,71]]},
    {s:563, d:'row', c:[
      {s:132, d:'col', c:[[94,'IL',22,71],[94,'OR',22,71],[95,'TN',22,71],[94,'WA',22,71],[93,'AR',28,70],[88,'AZ',28,70]]},
      {s:482, d:'col', c:[
        {s:155, d:'row', c:[[79,'VA',28,70],[80,'GA',28,70],[79,'NC',28,70],[80,'MS',28,70],[79,'PA',28,70],[80,'RI',28,70]]},
        {s:407, d:'row', c:[
          {s:148, d:'col', c:[[83,'MA',28,70],[82,'WY',37,69],[81,'MT',38,68],[81,'CT',38,68],[76,'CA',38,68]]},
          {s:333, d:'col', c:[
            {s:142, d:'row', c:[[83,'DE',38,68],[83,'FL',42,67],[83,'WV',42,67],[81,'NV',44,66]]},
            {s:264, d:'row', c:[
              {s:130, d:'col', c:[[89,'AK',44,66],[89,'ND',44,66],[84,'NM',44,66]]},
              {s:202, d:'col', c:[
                {s:113, d:'row', c:[[101,'MD',48,65],[100,'NY',49,64]]},
                {s:150, d:'row', c:[
                  {s:139, d:'col', c:[[81,'NJ',49,64],[68,'DC',51,60]]},
                  [62,'VI',52,55]
                ]}
              ]}
            ]}
          ]}
        ]}
      ]}
    ]}
  ]}
];
function build(parent, nodes) {
  for (const n of nodes) {
    const el = document.createElement('div');
    if (Array.isArray(n)) {
      const [s, state, rank, val] = n;
      el.className = 'cell' + (val >= 73 || val <= 60 ? ' lt' : '');
      el.style.flex = s + ' 1 0px';
      el.style.background = fill[val];
      const label = document.createElement('p');
      label.textContent = state + '\n' + rank + (state === 'DC' ? '' : '\n' + val + '.00');
      el.appendChild(label);
    } else {
      el.className = 'g ' + n.d;
      el.style.flex = n.s + ' 1 0px';
      build(el, n.c);
    }
    parent.appendChild(el);
  }
}
build(document.getElementById('map'), tree);
build(document.getElementById('mini'), tree);
```
